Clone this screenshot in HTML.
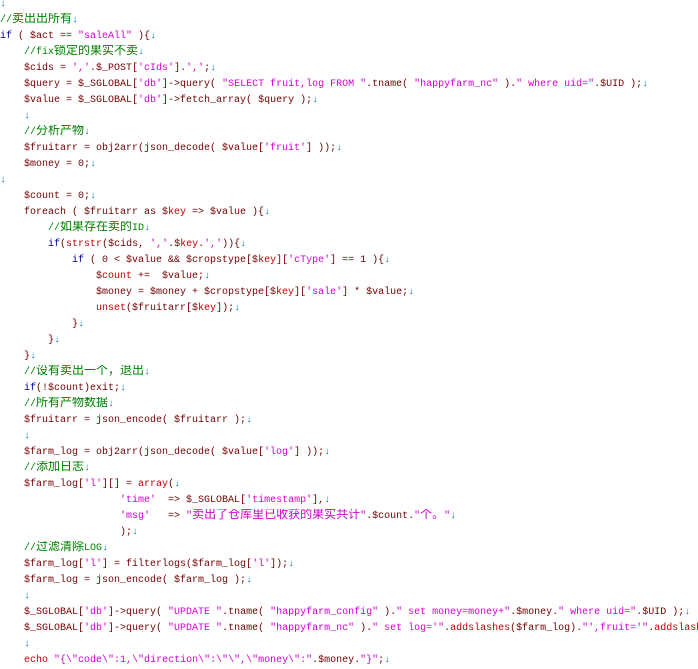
<!DOCTYPE html>
<html><head><meta charset="utf-8"><style>
html,body{margin:0;padding:0;background:#fff;width:698px;height:666px;overflow:hidden}
#w{position:absolute;left:0;top:-3px;width:698px;overflow:hidden}
.l{height:16px;line-height:16px;white-space:pre;font-family:"Liberation Mono",monospace;font-size:10px;color:#700000;overflow:hidden}
.z{font-family:"Noto Sans CJK SC",sans-serif;font-size:12px;line-height:10px}
.k{color:#0000a0}
.s{color:#d000d0}
.c{color:#008000}
.v{color:#c00000}
.a{color:#1070d0}
</style></head><body><div id="w">
<div class="l"><span class="a">↓</span></div>
<div class="l"><span class="c">//<span class="z">卖出出所有</span></span><span class="a">↓</span></div>
<div class="l"><span class="k">if</span> ( $act == <span class="s">"saleAll"</span> ){<span class="a">↓</span></div>
<div class="l">    <span class="c">//fix<span class="z">锁定的果实不卖</span></span><span class="a">↓</span></div>
<div class="l">    $cids = <span class="s">','</span>.$_POST[<span class="s">'cIds'</span>].<span class="s">','</span>;<span class="a">↓</span></div>
<div class="l">    $query = $_SGLOBAL[<span class="s">'db'</span>]-&gt;query( <span class="s">"SELECT fruit,log FROM "</span>.tname( <span class="s">"happyfarm_nc"</span> ).<span class="s">" where uid="</span>.$UID );<span class="a">↓</span></div>
<div class="l">    $value = $_SGLOBAL[<span class="s">'db'</span>]-&gt;fetch_array( $query );<span class="a">↓</span></div>
<div class="l">    <span class="a">↓</span></div>
<div class="l">    <span class="c">//<span class="z">分析产物</span></span><span class="a">↓</span></div>
<div class="l">    $fruitarr = obj2arr(json_decode( $value[<span class="s">'fruit'</span>] ));<span class="a">↓</span></div>
<div class="l">    $money = 0;<span class="a">↓</span></div>
<div class="l"><span class="a">↓</span></div>
<div class="l">    $count = 0;<span class="a">↓</span></div>
<div class="l">    foreach ( $fruitarr as $<span class="v">key</span> =&gt; $value ){<span class="a">↓</span></div>
<div class="l">        <span class="c">//<span class="z">如果存在卖的</span>ID</span><span class="a">↓</span></div>
<div class="l">        <span class="k">if</span>(<span class="v">strstr</span>($cids, <span class="s">','</span>.$<span class="v">key</span>.<span class="s">','</span>)){<span class="a">↓</span></div>
<div class="l">            <span class="k">if</span> ( 0 &lt; $value &amp;&amp; $cropstype[$<span class="v">key</span>][<span class="s">'cType'</span>] == 1 ){<span class="a">↓</span></div>
<div class="l">                $<span class="v">count</span> +=  $value;<span class="a">↓</span></div>
<div class="l">                $money = $money + $cropstype[$<span class="v">key</span>][<span class="s">'sale'</span>] * $value;<span class="a">↓</span></div>
<div class="l">                <span class="v">unset</span>($fruitarr[$<span class="v">key</span>]);<span class="a">↓</span></div>
<div class="l">            }<span class="a">↓</span></div>
<div class="l">        }<span class="a">↓</span></div>
<div class="l">    }<span class="a">↓</span></div>
<div class="l">    <span class="c">//<span class="z">设有卖出一个，退出</span></span><span class="a">↓</span></div>
<div class="l">    <span class="k">if</span>(!$count)exit;<span class="a">↓</span></div>
<div class="l">    <span class="c">//<span class="z">所有产物数据</span></span><span class="a">↓</span></div>
<div class="l">    $fruitarr = json_encode( $fruitarr );<span class="a">↓</span></div>
<div class="l">    <span class="a">↓</span></div>
<div class="l">    $farm_log = obj2arr(json_decode( $value[<span class="s">'log'</span>] ));<span class="a">↓</span></div>
<div class="l">    <span class="c">//<span class="z">添加日志</span></span><span class="a">↓</span></div>
<div class="l">    $farm_log[<span class="s">'l'</span>][] = <span class="v">array</span>(<span class="a">↓</span></div>
<div class="l">                    <span class="s">'time'</span>  =&gt; $_SGLOBAL[<span class="s">'timestamp'</span>],<span class="a">↓</span></div>
<div class="l">                    <span class="s">'msg'</span>   =&gt; <span class="s">"<span class="z">卖出了仓库里已收获的果实共计</span>"</span>.$count.<span class="s">"<span class="z">个。</span>"</span><span class="a">↓</span></div>
<div class="l">                    );<span class="a">↓</span></div>
<div class="l">    <span class="c">//<span class="z">过滤清除</span>LOG</span><span class="a">↓</span></div>
<div class="l">    $farm_log[<span class="s">'l'</span>] = filterlogs($farm_log[<span class="s">'l'</span>]);<span class="a">↓</span></div>
<div class="l">    $farm_log = json_encode( $farm_log );<span class="a">↓</span></div>
<div class="l">    <span class="a">↓</span></div>
<div class="l">    $_SGLOBAL[<span class="s">'db'</span>]-&gt;query( <span class="s">"UPDATE "</span>.tname( <span class="s">"happyfarm_config"</span> ).<span class="s">" set money=money+"</span>.$money.<span class="s">" where uid="</span>.$UID );<span class="a">↓</span></div>
<div class="l">    $_SGLOBAL[<span class="s">'db'</span>]-&gt;query( <span class="s">"UPDATE "</span>.tname( <span class="s">"happyfarm_nc"</span> ).<span class="s">" set log='"</span>.<span class="v">addslashes</span>($farm_log).<span class="s">"',fruit='"</span>.<span class="v">addslashes</span>($fruitarr).<span class="s">"'"</span></div>
<div class="l">    <span class="a">↓</span></div>
<div class="l">    <span class="v">echo</span> <span class="s">"{\"code\":1,\"direction\":\"\",\"money\":"</span>.$money.<span class="s">"}"</span>;<span class="a">↓</span></div>
</div></body></html>
